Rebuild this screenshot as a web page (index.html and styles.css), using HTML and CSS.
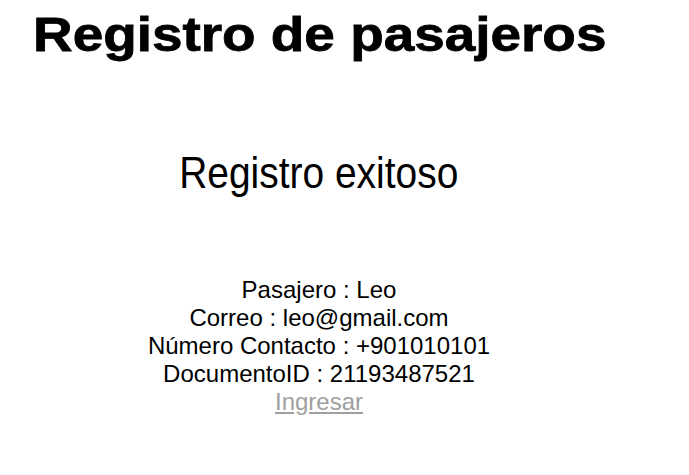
FILE: index.html
```html
<!DOCTYPE html>
<html lang="es">
<head>
<meta charset="utf-8">
<title>Registro de pasajeros</title>
<link rel="stylesheet" href="styles.css">
</head>
<body>
<header class="top">
  <h1 class="title">Registro de pasajeros</h1>
</header>
<main class="result">
  <h2 class="status">Registro exitoso</h2>
  <div class="details">
    <p class="line">Pasajero : Leo</p>
    <p class="line">Correo : leo@gmail.com</p>
    <p class="line">Número Contacto : +901010101</p>
    <p class="line">DocumentoID : 21193487521</p>
    <a class="link" href="#">Ingresar</a>
  </div>
</main>
</body>
</html>
```
FILE: styles.css
```css
html, body {
  margin: 0;
  padding: 0;
  background: #ffffff;
  color: #000000;
  font-family: "Liberation Sans", Arial, sans-serif;
}
.top {
  padding: 8px 0 0 33px;
}
.title {
  display: inline-block;
  margin: 0;
  font-size: 49px;
  line-height: 52px;
  font-weight: 700;
  -webkit-text-stroke: 0.8px #000;
  transform: scaleX(1.12);
  transform-origin: left center;
}
.result {
  width: 638px;
  text-align: center;
}
.status {
  display: inline-block;
  margin: 88px 0 0 0;
  font-size: 44px;
  line-height: 50px;
  font-weight: 400;
  transform: scaleX(0.885);
}
.details {
  margin-top: 78px;
  display: flex;
  flex-direction: column;
  align-items: center;
}
.line {
  margin: 0;
  font-size: 24px;
  line-height: 28px;
}
.link {
  font-size: 24px;
  line-height: 28px;
  color: #a0a0a0;
  text-decoration: underline;
}
```
